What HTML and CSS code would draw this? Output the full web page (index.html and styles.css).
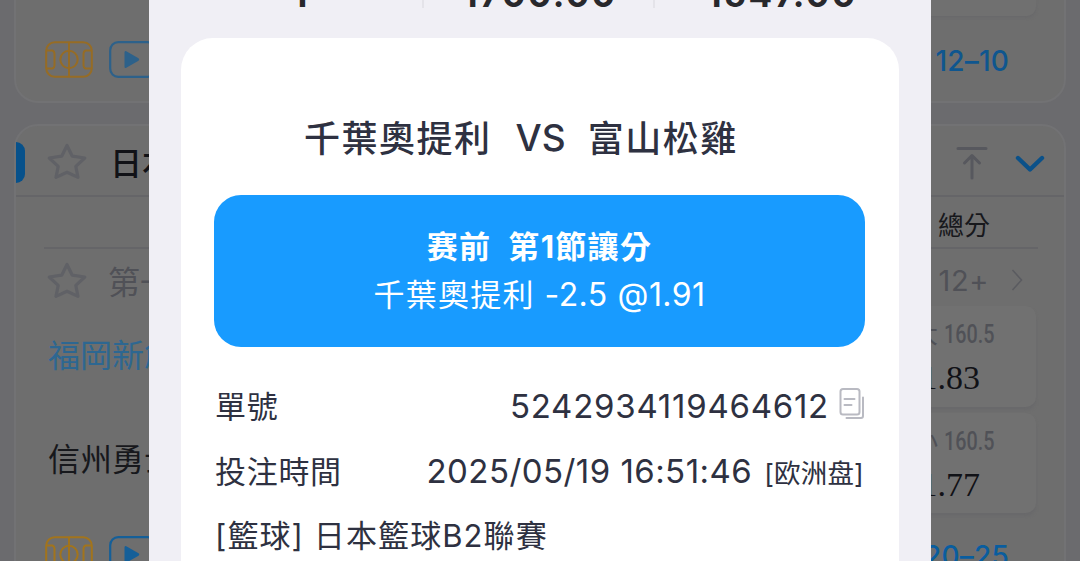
FILE: index.html
```
<!DOCTYPE html>
<html lang="zh-Hant">
<head>
<meta charset="utf-8">
<title>注單詳情</title>
<link rel="stylesheet" href="styles.css">
</head>
<body>
<svg class="defs" width="0" height="0">
  <symbol id="court" viewBox="0 0 48 37"><g fill="none" stroke="currentColor" stroke-width="2"><rect x="1.200" y="1.200" width="45.600" height="34.600" rx="8.500"/><path d="M24 1v35M1 9.500h6.500q2 1 2 3v12q0 2-2 3H1M47 9.500h-6.500q-2 1-2 3v12q0 2 2 3H47"/><circle cx="24" cy="18.500" r="8.700"/></g></symbol>
  <symbol id="play" viewBox="0 0 48 37"><rect x="1.200" y="1.200" width="45.600" height="34.600" rx="8" fill="none" stroke="currentColor" stroke-width="2.200"/><path d="M15.500 11.500v14q0 2.200 1.800 1.200l12.200-7q1.500-1.200 0-2.400L17.300 10.300q-1.800-1-1.800 1.200z" fill="currentColor"/></symbol>
  <symbol id="star" viewBox="0 0 42 38"><path d="M21 3.500l5.300 10.700 12.500 1.800-9 8.400 2.200 11L21 30.300 10 35.400l2.200-11L3.200 16l12.500-1.800z" fill="none" stroke="currentColor" stroke-width="3.200" stroke-linejoin="round"/></symbol>
</svg>
<div class="screen">
  <main class="list">
    <section class="card card-prev">
      <div class="prev-odd"></div>
      <div class="media-row">
        <svg class="court"><use href="#court"/></svg>
        <svg class="play"><use href="#play"/></svg>
        <span class="score">12–10</span>
      </div>
    </section>
    <section class="card card-league">
      <header class="league">
        <i class="league-tab"></i>
        <svg class="star"><use href="#star"/></svg>
        <b class="league-name">日本</b>
        <svg class="to-top" viewBox="0 0 32 34"><path d="M2 2.500h28M16 32V10M8.500 17L16 9.500l7.500 7.500" fill="none" stroke="currentColor" stroke-width="3" stroke-linecap="round" stroke-linejoin="round"/></svg>
        <svg class="chevron" viewBox="0 0 30 18"><path d="M3 3l12 11.500L27 3" fill="none" stroke="currentColor" stroke-width="4.400" stroke-linecap="round" stroke-linejoin="round"/></svg>
      </header>
      <div class="columns"><span>總分</span></div>
      <div class="period">
        <svg class="star"><use href="#star"/></svg>
        <span class="period-name">第一</span>
        <span class="more">12+</span>
        <svg class="next" viewBox="0 0 12 24"><path d="M1.500 2l9 10-9 10" fill="none" stroke="currentColor" stroke-width="1.500"/></svg>
      </div>
      <div class="match">
        <div class="teams"><span class="home">福岡新創</span><span>信州勇士</span></div>
        <div class="odds">
          <div class="odd"><span class="line"><em>大</em><span>160.5</span></span><span class="price">1.83</span></div>
          <div class="odd"><span class="line"><em>小</em><span>160.5</span></span><span class="price">1.77</span></div>
        </div>
      </div>
      <div class="media-row media-last">
        <svg class="court"><use href="#court"/></svg>
        <svg class="play"><use href="#play"/></svg>
        <span class="score">20–25</span>
      </div>
    </section>
  </main>
  <div class="modal">
    <div class="totals"><span>1</span><span>1700.00</span><span>1547.00</span></div>
    <article class="slip">
      <h1 class="versus"><span class="team-a">千葉奧提利</span><span class="vs">VS</span><span class="team-b">富山松雞</span></h1>
      <div class="pick">
        <div class="market"><span lang="zh-Hans">赛前</span><span>第1節讓分</span></div>
        <div class="choice"><span class="choice-team">千葉奧提利</span><span class="choice-line">-2.5</span><span class="choice-odd">@1.91</span></div>
      </div>
      <div class="row"><span>單號</span><span class="ticket">5242934119464612</span>
        <svg class="copy" viewBox="0 0 26 34"><g fill="none" stroke="currentColor" stroke-width="2" stroke-linecap="round"><rect x="1.500" y="2" width="19" height="25.500" rx="2.500"/><path d="M5.500 12h10M5.500 18h7"/><path d="M24 10.500V29q0 2-2 2H7.500"/></g></svg>
      </div>
      <div class="row"><span>投注時間</span><span class="time">2025/05/19 16:51:46</span><span class="plate" lang="zh-Hans">[欧洲盘]</span></div>
      <div class="row"><span class="league-line">[籃球] 日本籃球B2聯賽</span></div>
    </article>
  </div>
</div>
</body>
</html>
```
FILE: styles.css
```
* { box-sizing: border-box; }
body { margin: 0; font-family: Inter, "Noto Sans CJK TC", sans-serif; }
[lang="zh-Hans"] { font-family: Inter, "Noto Sans CJK SC", sans-serif; }
.defs { position: absolute; }
.screen { position: relative; width: 1080px; height: 561px; overflow: hidden; background: #6b6b6e; }
svg { display: block; flex: none; }

.list { padding: 0 14px; }
.card { background: #6e6e6e; border: 2px solid #727274; width: 1052px; }
.card-prev { height: 103px; border-top: 0; border-radius: 0 0 24px 24px; }
.prev-odd { width: 200px; height: 16px; margin: 0 28px 25px auto; background: #707070; border-radius: 0 0 9px 9px; box-shadow: 0 2px 3px #69696b; }
.media-row { display: flex; align-items: center; height: 37px; padding: 0 55px 0 29px; }
.court { width: 48px; height: 37px; color: #966c25; }
.play { width: 48px; height: 37px; margin-left: 16px; color: #2d618a; }
.score { margin-left: auto; padding-top: 2px; color: #0f568f; font-size: 28px; font-weight: 500; letter-spacing: .2px; }

.card-league { margin-top: 21px; height: 500px; border-radius: 24px; }
.league { display: flex; align-items: center; height: 71px; padding: 3px 19px 0 0; border-bottom: 2px solid #656568; }
.league-tab { width: 9px; height: 41px; background: #07518b; border-radius: 0 9px 9px 0; }
.star { width: 42px; height: 38px; margin-left: 21px; color: #606166; }
.league .star { margin-top: -2px; }
.league-name { margin: 4px 0 0 22px; width: 80px; font-size: 32px; font-weight: 500; color: #111217; line-height: 40px; }
.to-top { width: 32px; height: 34px; margin: 2px 0 0 auto; color: #57585e; }
.chevron { width: 30px; height: 18px; margin: 4px 0 0 27px; color: #0b5189; }
.columns { display: flex; justify-content: flex-end; align-items: center; height: 52px; margin: 0 26px 0 28px; padding: 2px 48px 0 0; border-bottom: 2px solid #656568; font-size: 26px; color: #17181c; }
.period { display: flex; align-items: center; height: 62px; padding-right: 41px; color: #505157; }
.period .star { margin-left: 30px; }
.period-name { margin-left: 20px; font-size: 32px; }
.more { margin-left: auto; font-size: 29px; letter-spacing: .6px; }
.next { width: 12px; height: 24px; margin-left: 22px; color: #5a5b60; }
.match { display: flex; justify-content: space-between; padding: 0 28px 0 32px; height: 207px; margin-top: -5px; }
.teams { display: flex; flex-direction: column; font-size: 32px; line-height: 48px; gap: 56px; padding-top: 26px; color: #17181c; }
.home { color: #2d6791; }
.odds { display: flex; flex-direction: column; gap: 6px; width: 190px; }
.odd { height: 101px; padding: 13px 41px 0 0; border-radius: 10px; background: #717171; box-shadow: 0 3px 3px #69696b; display: flex; flex-direction: column; align-items: flex-end; }
.line { display: flex; align-items: center; gap: 6px; height: 32px; color: #505157; font: 25px/32px Roboto, "Noto Sans CJK TC", sans-serif; font-weight: 500; }
.line span { display: block; width: 51px; transform: scaleX(.79); transform-origin: left; }
.line em { font-style: normal; font-weight: 400; }
.price { margin: 7px 15px 0 0; color: #111217; font: 34px/40px "Liberation Serif", serif; }
.media-last { margin-top: 23px; }
.media-last .court { color: #a2741c; }
.media-last .play { color: #155f98; }
.media-last .score { color: #095d9f; }

.modal { position: absolute; left: 149px; top: 0; width: 782px; height: 561px; padding: 0 32px; background: #f0eff5; color: #2e3141; }
.totals { display: grid; grid-template-columns: 245px 231px 253px; height: 38px; margin: 0 -4px; color: #28282c; font-size: 35px; font-weight: 700; line-height: 30px; text-align: center; }
.totals span { height: 30px; margin-top: -22px; padding: 1px 0 0 3px; letter-spacing: 2.3px; }
.totals span + span { border-left: 2px solid #e4e3e9; }
.slip { height: 523px; padding: 73px 34px 0 33px; background: #fff; border-radius: 32px 32px 0 0; }
.versus { display: flex; margin: 0 0 0 90px; height: 56px; align-items: center; font-size: 36px; line-height: 56px; font-weight: 500; white-space: nowrap; }
.team-a, .team-b { letter-spacing: 1.5px; }
.vs { margin: -2px 22px 0 24px; font-size: 37px; }
.pick { height: 152px; margin: 28px 0 0; padding-top: 28px; border-radius: 27px; background: #189bff; color: #fff; }
.market { display: flex; justify-content: center; gap: 17px; font-size: 31px; line-height: 48px; font-weight: 700; height: 48px; letter-spacing: 1.300px; }
.choice { display: flex; justify-content: center; gap: 10px; font-size: 32px; line-height: 48px; height: 48px; letter-spacing: .4px; }
.choice-team { font-size: 31px; letter-spacing: 1.200px; }
.row { display: flex; align-items: center; height: 65px; font-size: 31px; line-height: 40px; white-space: nowrap; }
.pick + .row { margin-top: 27px; }
.row > span:first-child { margin-left: 1px; letter-spacing: .7px; }
.row > .league-line:first-child { margin-top: -1px; letter-spacing: 1.100px; }
.ticket { margin: -2px 0 0 auto; font-size: 33px; letter-spacing: .75px; }
.copy { width: 26px; height: 34px; margin: -5px 0 0 10px; color: #b9bac2; }
.time { margin: -2px 0 0 auto; font-size: 33px; letter-spacing: .45px; }
.plate { margin: 2px 1px 0 12px; font-size: 26.500px; letter-spacing: .2px; }
```
